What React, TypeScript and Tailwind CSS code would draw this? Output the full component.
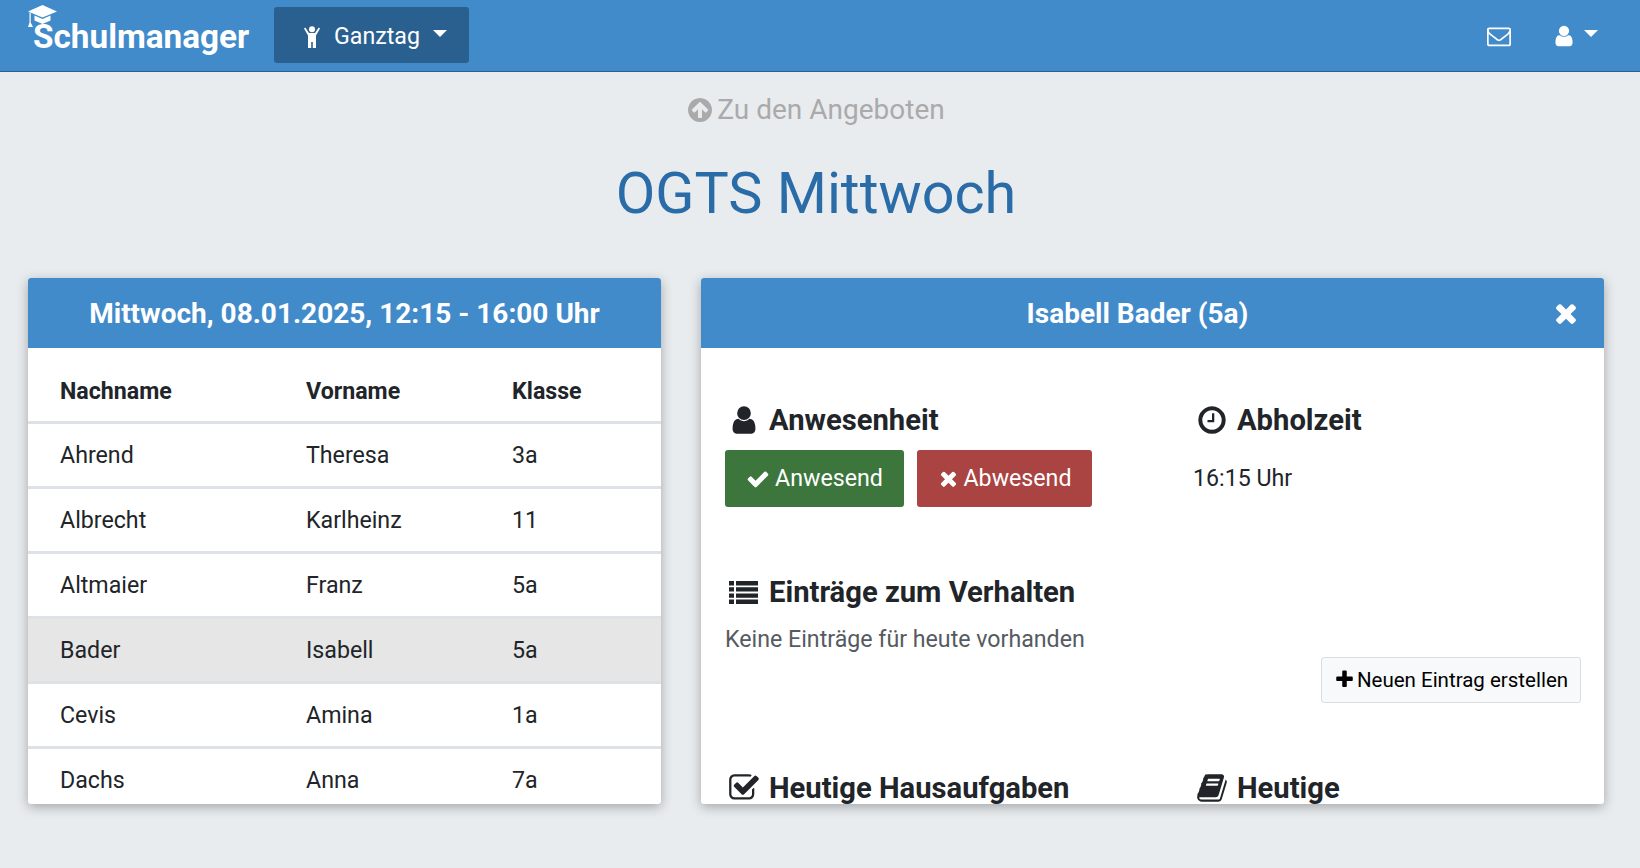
import React from "react";

const P = {
  user: "M1536 1399q0 109-62.5 187t-150.5 78h-854q-88 0-150.5-78t-62.5-187q0-85 8.5-160.5t31.5-152 58.5-131 94-89 134.5-34.5q131 128 313 128t313-128q76 0 134.5 34.5t94 89 58.5 131 31.5 152 8.5 160.5zm-256-887q0 159-112.5 271.5t-271.5 112.5-271.5-112.5-112.5-271.5 112.5-271.5 271.5-112.5 271.5 112.5 112.5 271.5z",
  times: "M1490 1322q0 40-28 68l-136 136q-28 28-68 28t-68-28l-294-294-294 294q-28 28-68 28t-68-28l-136-136q-28-28-28-68t28-68l294-294-294-294q-28-28-28-68t28-68l136-136q28-28 68-28t68 28l294 294 294-294q28-28 68-28t68 28l136 136q28 28 28 68t-28 68l-294 294 294 294q28 28 28 68z",
  check: "M1671 566q0 40-28 68l-724 724-136 136q-28 28-68 28t-68-28l-136-136-362-362q-28-28-28-68t28-68l136-136q28-28 68-28t68 28l294 295 656-657q28-28 68-28t68 28l136 136q28 28 28 68z",
  plus: "M1600 736v192q0 40-28 68t-68 28h-416v416q0 40-28 68t-68 28h-192q-40 0-68-28t-28-68v-416h-416q-40 0-68-28t-28-68v-192q0-40 28-68t68-28h416v-416q0-40 28-68t68-28h192q40 0 68 28t28 68v416h416q40 0 68 28t28 68z",
  up: "M1412 897q0-27-18-45l-362-362-91-91q-18-18-45-18t-45 18l-91 91-362 362q-18 18-18 45t18 45l92 91q18 18 45 18t45-18l189-189v502q0 26 19 45t45 19h128q26 0 45-19t19-45v-502l189 189q19 19 45 19t45-19l91-91q18-18 18-45zm252-1q0 209-103 385.5t-279.5 279.5-385.5 103-385.5-103-279.5-279.5-103-385.5 103-385.5 279.5-279.5 385.5-103 385.5 103 279.5 279.5 103 385.5z",
  mail: "M1664 1504v-768q-32 36-69 66-268 206-426 338-51 43-83 67t-86.5 48.5-102.5 24.5h-2q-48 0-102.5-24.5t-86.5-48.5-83-67q-158-132-426-338-37-30-69-66v768q0 13 9.5 22.5t22.5 9.5h1472q13 0 22.5-9.5t9.5-22.5zm0-1051v-24.5l-.5-13-3-12.5-5.5-9-9-7.5-14-2.5h-1472q-13 0-22.5 9.5t-9.5 22.5q0 168 147 284 193 152 401 317 6 5 35 29.5t46 37.5 44.5 31.5 50.5 27.5 43 9h2q20 0 43-9t50.5-27.5 44.5-31.5 46-37.5 35-29.5q208-165 401-317 54-43 100.5-115.5t46.5-131.5zm128-37v1088q0 66-47 113t-113 47h-1472q-66 0-113-47t-47-113v-1088q0-66 47-113t113-47h1472q66 0 113 47t47 113z",
  clock: "M1024 544v448q0 14-9 23t-23 9h-320q-14 0-23-9t-9-23v-64q0-14 9-23t23-9h224v-352q0-14 9-23t23-9h64q14 0 23 9t9 23zm416 352q0-148-73-273t-198-198-273-73-273 73-198 198-73 273 73 273 198 198 273 73 273-73 198-198 73-273zm224 0q0 209-103 385.5t-279.5 279.5-385.5 103-385.5-103-279.5-279.5-103-385.5 103-385.5 279.5-279.5 385.5-103 385.5 103 279.5 279.5 103 385.5z",
  checkSq: "M1472 930v318q0 119-84.5 203.5t-203.5 84.5h-832q-119 0-203.5-84.5t-84.5-203.5v-832q0-119 84.5-203.5t203.5-84.5h832q63 0 117 25 15 7 18 23 3 17-9 29l-49 49q-10 10-23 10-3 0-9-2-23-6-45-6h-832q-66 0-113 47t-47 113v832q0 66 47 113t113 47h832q66 0 113-47t47-113v-254q0-13 9-22l64-64q10-10 23-10 6 0 12 3 20 8 20 29zm231-489l-814 814q-24 24-57 24t-57-24l-430-430q-24-24-24-57t24-57l110-110q24-24 57-24t57 24l263 263 647-647q24-24 57-24t57 24l110 110q24 24 24 57t-24 57z",
  book: "M1703 478q40 57 18 129l-275 906q-19 64-76.5 107.5t-122.5 43.5h-923q-77 0-148.5-53.5t-99.5-131.5q-24-67-2-127 0-4 3-27t4-37q1-8-3-21.5t-3-19.5q2-11 8-21t16.5-23.5 16.5-23.5q23-38 45-91.5t30-91.5q3-10 .5-30t-.5-28q3-11 17-28t17-23q21-36 42-92t25-90q1-9-2.5-32t.5-28q4-13 22-30.5t22-22.5q19-26 42.5-84.5t27.5-96.5q1-8-3-25.5t-2-26.5q2-8 9-18t18-23 17-21q8-12 16.5-30.5t15-35 16-36 19.5-32 26.5-23.5 36-11.5 47.5 5.5l-1 3q38-9 51-9h761q74 0 114 56t18 130l-274 906q-36 119-71.5 153.5t-128.5 34.5h-869q-27 0-38 15-11 16-1 43 24 70 144 70h923q29 0 56-15.5t35-41.5l300-987q7-22 5-57 38 15 59 43zm-1064 2q-4 13 2 22.5t20 9.5h608q13 0 25.5-9.5t16.5-22.5l21-64q4-13-2-22.5t-20-9.5h-608q-13 0-25.5 9.5t-16.5 22.5zm-83 256q-4 13 2 22.5t20 9.5h608q13 0 25.5-9.5t16.5-22.5l21-64q4-13-2-22.5t-20-9.5h-608q-13 0-25.5 9.5t-16.5 22.5z",
};

function Fa({ d, className }: { d: string; className?: string }) {
  return (
    <svg viewBox="0 0 1792 1792" fill="currentColor" className={className} aria-hidden="true">
      <path d={d} />
    </svg>
  );
}

function ListIcon() {
  return (
    <svg viewBox="0 0 29 23" fill="currentColor" className="w-[29px] h-[23px] mr-[2px]" aria-hidden="true">
      <path d="M0 0h5v4.400H0zM7 0h22v4.400H7zM0 6.200h5v4.400H0zM7 6.200h22v4.400H7zM0 12.400h5v4.400H0zM7 12.400h22v4.400H7zM0 18.600h5V23H0zM7 18.600h22V23H7z" />
    </svg>
  );
}

function Caret() {
  return <span className="inline-block border-x-[7px] border-t-[7px] border-x-transparent border-t-white" />;
}

function Heading({ icon, children }: { icon: React.ReactNode; children: React.ReactNode }) {
  return (
    <div className="flex items-center h-[36px] text-[29.2px] font-bold text-[#212529] whitespace-nowrap">
      <span className="w-[44px] flex justify-center shrink-0 pr-[6px]">{icon}</span>
      <span className="pt-[2px]">{children}</span>
    </div>
  );
}

const big = "w-[32px] h-[32px]";

const rows = [
  ["Ahrend", "Theresa", "3a"],
  ["Albrecht", "Karlheinz", "11"],
  ["Altmaier", "Franz", "5a"],
  ["Bader", "Isabell", "5a"],
  ["Cevis", "Amina", "1a"],
  ["Dachs", "Anna", "7a"],
];

export default function App() {
  return (
    <div className="w-[1640px] h-[868px] overflow-hidden bg-[#e9ecef] text-[#212529] font-['Roboto',sans-serif] text-[23.2px]">
      <header className="h-[72px] bg-[#428bca] border-b border-[#2c5f8a] flex items-center pl-[33px] pr-[42px] text-white">
        <div className="relative w-[241px] text-[33.3px] font-bold leading-none pt-[2px]">
          <svg viewBox="0 0 30 28" className="absolute left-[-5px] top-[-13px] w-[30px] h-[28px]" fill="white" aria-hidden="true">
            <path d="M14.500 0 29 6.500 14.500 12.500 0 6.500z" />
            <path d="M6.500 10.500 14.500 14 22.500 10.500V15.500L14.500 19 6.500 15.500z" />
            <path d="M1.500 7.500h1.200v10L5 22H0l1.500-4.500z" />
          </svg>
          Schulmanager
        </div>
        <button className="w-[195px] h-[56px] mb-[2px] pt-[4px] rounded-[3px] bg-[#2a6090] flex items-center pl-[30px]">
          <svg viewBox="0 0 16 22" className="w-[16px] h-[22px]" fill="white" aria-hidden="true">
            <circle cx="8" cy="3.200" r="3" />
            <path d="M1.300 1.500 5 7h6l3.700-5.500L16 2.500l-4 7v12.500H8.800v-6H7.200v6H4V9.500l-4-7z" />
          </svg>
          <span className="ml-[14px] leading-none">Ganztag</span>
          <span className="ml-[13px] mb-[7px] flex"><Caret /></span>
        </button>
        <Fa d={P.mail} className="ml-auto w-[24px] h-[24px]" />
        <Fa d={P.user} className="ml-[41px] w-[24px] h-[24px]" />
        <span className="ml-[8px] mb-[5px] flex"><Caret /></span>
      </header>

      <div className="h-[76px] flex items-center justify-center gap-[3px] text-[#aaaaaa] text-[28px] pr-[9px]">
        <Fa d={P.up} className="w-[28px] h-[28px]" />
        <span>Zu den Angeboten</span>
      </div>

      <h1 className="text-center text-[57.500px] leading-[66px] text-[#2a6ca8] mt-[13px] pr-[8px]">OGTS Mittwoch</h1>

      <main className="flex pl-[28px] pr-[36px] mt-[51px] gap-[40px]">
        <section className="w-[633px] h-[526px] bg-white rounded-[3px] overflow-hidden shadow-[0_3px_12px_rgba(0,0,0,0.3)]">
          <div className="h-[70px] pt-[2px] bg-[#428bca] text-white font-bold text-[28px] flex items-center justify-center">
            Mittwoch, 08.01.2025, 12:15 - 16:00 Uhr
          </div>
          <div className="grid grid-cols-[246px_206px_1fr] pl-[32px] h-[76px] pt-[14px] items-center font-bold border-b-[3px] border-[#dee2e6]">
            <div>Nachname</div>
            <div>Vorname</div>
            <div>Klasse</div>
          </div>
          {rows.map((r) => (
            <div
              key={r[0]}
              className={`grid grid-cols-[246px_206px_1fr] pl-[32px] h-[65px] items-center border-b-[3px] border-[#dee2e6] ${r[0] === "Bader" ? "bg-[#e6e6e6]" : ""}`}
            >
              <div>{r[0]}</div>
              <div>{r[1]}</div>
              <div>{r[2]}</div>
            </div>
          ))}
        </section>

        <section className="w-[903px] h-[526px] bg-white rounded-[3px] overflow-hidden shadow-[0_3px_12px_rgba(0,0,0,0.3)]">
          <div className="relative h-[70px] pt-[2px] bg-[#428bca] text-white font-bold text-[28px] flex items-center justify-center pr-[30px]">
            Isabell Bader (5a)
            <Fa d={P.times} className="absolute right-[23px] top-[20px] w-[30px] h-[30px]" />
          </div>
          <div className="px-[24px] pt-[54px]">
            <div className="grid grid-cols-[468px_1fr]">
              <div>
                <Heading icon={<Fa d={P.user} className={big} />}>Anwesenheit</Heading>
                <div className="flex gap-[13px] mt-[12px]">
                  <button className="h-[57px] w-[179px] rounded-[3px] bg-[#3c763d] text-white flex items-center justify-center gap-[5px]">
                    <Fa d={P.check} className="w-[24px] h-[24px]" />
                    Anwesend
                  </button>
                  <button className="h-[57px] w-[175px] rounded-[3px] bg-[#a94442] text-white flex items-center justify-center gap-[3px]">
                    <Fa d={P.times} className="w-[23px] h-[23px]" />
                    Abwesend
                  </button>
                </div>
              </div>
              <div>
                <Heading icon={<Fa d={P.clock} className={big} />}>Abholzeit</Heading>
                <div className="mt-[12px] h-[57px] flex items-center">16:15 Uhr</div>
              </div>
            </div>

            <div className="mt-[67px]">
              <Heading icon={<ListIcon />}>Einträge zum Verhalten</Heading>
              <p className="mt-[12px] text-[#555b61]">Keine Einträge für heute vorhanden</p>
              <div className="flex justify-end mr-[-1px]">
                <button className="h-[46px] w-[260px] border border-[#dadde0] rounded-[3px] bg-[#f8f9fa] text-black text-[20.500px] flex items-center justify-center gap-[2px]">
                  <Fa d={P.plus} className="w-[21px] h-[21px]" />
                  <span className="pt-[2px]">Neuen Eintrag erstellen</span>
                </button>
              </div>
            </div>

            <div className="grid grid-cols-[468px_1fr] mt-[67px]">
              <Heading icon={<Fa d={P.checkSq} className={big} />}>Heutige Hausaufgaben</Heading>
              <Heading icon={<Fa d={P.book} className={big} />}>Heutige</Heading>
            </div>
          </div>
        </section>
      </main>
    </div>
  );
}
